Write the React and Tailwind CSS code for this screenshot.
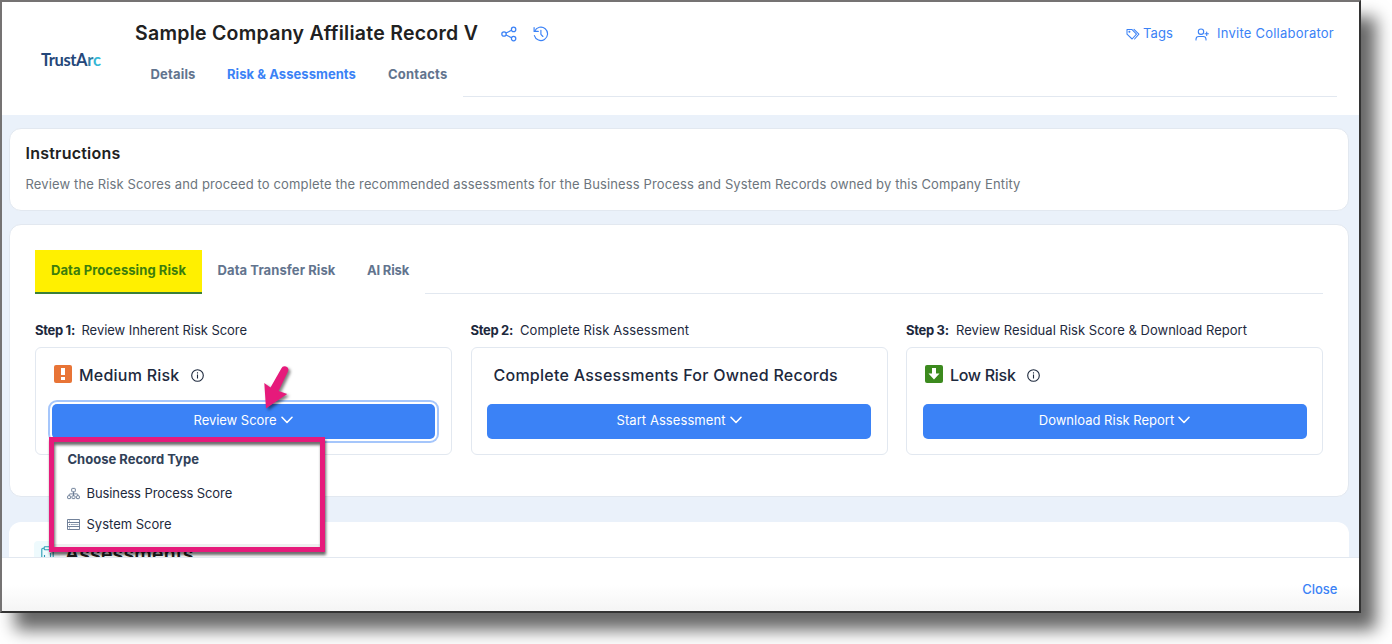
import React from 'react';

const ShareIcon = () => (
  <svg className="w-4 h-4" viewBox="0 0 16 16" fill="none" stroke="currentColor" strokeWidth="1.25">
    <circle cx="3" cy="8" r="2.2" />
    <circle cx="12.6" cy="3.4" r="2.2" />
    <circle cx="12.6" cy="12.6" r="2.2" />
    <path d="m5 7 5.6-2.7M5 9l5.6 2.7" />
  </svg>
);

const HistoryIcon = () => (
  <svg className="w-4 h-4" viewBox="0 0 16 16" fill="none" stroke="currentColor" strokeWidth="1.15" strokeLinecap="round" strokeLinejoin="round">
    <path d="M1.7 5.2A6.7 6.7 0 1 1 1.4 9.6" />
    <path d="M1.1 1.6v3.8h4.2M7.9 4.3v4l2 2.2" />
  </svg>
);

const TagsIcon = () => (
  <svg className="w-[14px] h-[13px]" viewBox="0 0 14 13" fill="none" stroke="currentColor" strokeWidth="1.05" strokeLinejoin="round">
    <path d="M1 1.4h4.8l4.7 4.7-4.4 4.9L1 6.2z" />
    <path d="M8 1.4 12.9 6.1 8.6 11" strokeLinecap="round" />
    <circle cx="3.4" cy="3.7" r="0.5" />
  </svg>
);

const InviteIcon = () => (
  <svg className="w-[14px] h-[13px]" viewBox="0 0 14 13" fill="none" stroke="currentColor" strokeWidth="1.1" strokeLinecap="round">
    <circle cx="6" cy="3.7" r="2.7" />
    <path d="M1 12v-.7c0-1.7 1.2-2.8 2.8-2.8h4.4c1.6 0 2.8 1.1 2.8 2.8v.7M11.7 4v3.4M10 5.7h3.4" />
  </svg>
);

const InfoIcon = () => (
  <svg className="w-[13px] h-[13px]" viewBox="0 0 13 13" fill="none" stroke="currentColor" strokeWidth="1.1">
    <circle cx="6.5" cy="6.5" r="5.8" />
    <path d="M6.5 5.6v4M6.5 3.2v1.3" />
  </svg>
);

const OrgIcon = () => (
  <svg className="w-[13px] h-[13px]" viewBox="0 0 13 13" fill="none" stroke="currentColor" strokeWidth="0.9">
    <rect x="4.7" y="1.4" width="3.6" height="3.4" rx="0.6" />
    <path d="M6.5 4.8v4M2.1 8.8V7.9q0-1 1-1h6.8q1 0 1 1v.9" />
    <rect x="0.6" y="8.8" width="3" height="2.8" rx="0.6" />
    <rect x="5" y="8.8" width="3" height="2.8" rx="0.6" />
    <rect x="9.4" y="8.8" width="3" height="2.8" rx="0.6" />
  </svg>
);

const ServerIcon = () => (
  <svg className="w-[13px] h-[13px]" viewBox="0 0 13 13" fill="none" stroke="currentColor" strokeWidth="0.9">
    <path d="M.5 1.5h12v10H.5zM.5 4.5h12M.5 8.5h12" />
    <path d="M2 3h1M2 6.5h1M3.8 6.5h1M2 10h1" />
    <path d="M5 6.5h6.5" strokeWidth="0.6" />
  </svg>
);

const ChevronIcon = () => (
  <svg className="w-3 h-2 ml-1 -mt-[3px]" viewBox="0 0 12 8" fill="none" stroke="currentColor" strokeWidth="1.6" strokeLinecap="round" strokeLinejoin="round">
    <path d="M1 1.3 6 6.5l5-5.2" />
  </svg>
);

const MediumIcon = () => (
  <svg className="w-[18px] h-[18px]" viewBox="0 0 18 18">
    <rect width="18" height="18" rx="2" fill="#e87436" />
    <path d="M7 3h4v7H7zM7 12h4v3H7z" fill="#fff" />
  </svg>
);

const LowIcon = () => (
  <svg className="w-[18px] h-[18px]" viewBox="0 0 18 18">
    <rect width="18" height="18" rx="2" fill="#3c8a1e" />
    <path d="M7 3h4v5.5h3.5L9 14.5 3.5 8.5H7z" fill="#fff" />
  </svg>
);

const ClipboardIcon = () => (
  <svg className="w-[13px] h-4" viewBox="0 0 13 16" fill="none" stroke="#2a9db5" strokeWidth="1.1">
    <path d="M3 2.2H1.8q-1 0-1 1V14q0 1 1 1h9.4q1 0 1-1V3.2q0-1-1-1H10" />
    <rect x="3.2" y="0.7" width="6.8" height="3" rx="0.8" />
    <path d="M3.5 9v3M6.5 11v1M9.5 7v5" />
  </svg>
);

const StepCard = ({ step, label, labelClass, active, button, buttonClass, children, menu }) => (
  <div className="relative">
    <p className="flex h-[18px] items-center leading-[18px]">
      <span className="w-[46.5px] shrink-0 font-bold tracking-[-0.31px]">{step}</span>
      <span className={labelClass}>{label}</span>
    </p>
    <div className="mt-2 h-[108px] rounded-md border border-slate-200 px-[15.5px] pt-[15px]">
      <div className="flex h-6 items-center text-base font-medium">{children}</div>
      <button
        className={`mt-[17px] flex h-[35px] items-center justify-center rounded-[5px] bg-[#3b82f6] pb-px text-white ${active ? 'w-[383px] shadow-[0_0_0_2px_#fff,0_0_0_4px_#a5c6fb]' : 'w-full'}`}
      >
        <span className={buttonClass}>{button}</span>
        <ChevronIcon />
      </button>
    </div>
    {menu}
  </div>
);

const RecordMenu = () => (
  <div className="absolute left-[14px] top-[116px] z-10 h-[115px] w-[276px] bg-[#efefef]">
    <div className="h-[107px] bg-white pl-[18px] pt-3">
      <p className="h-[20px] pl-[0.5px] font-bold leading-[20px] text-slate-700">Choose Record Type</p>
      <div className="mt-[14px] flex h-[21px] items-center gap-[6.5px]">
        <span className="text-slate-500"><OrgIcon /></span>
        <span className="tracking-[-0.1px]">Business Process Score</span>
      </div>
      <div className="mt-[10px] flex h-[21px] items-center gap-[6.5px]">
        <span className="text-slate-500"><ServerIcon /></span>
        <span>System Score</span>
      </div>
    </div>
    <div className="absolute inset-0 border-[5px] border-[#e61a7b] drop-shadow-[1px_3px_1.5px_rgba(0,0,0,0.6)]" />
  </div>
);

const PointerArrow = () => (
  <svg className="absolute left-[220px] top-[38px] z-20 h-[56px] w-[44px] drop-shadow-[2px_2px_1.5px_rgba(0,0,0,0.5)]" viewBox="255 360 44 56">
    <path
      d="M266 409.5 264.3 384l6.2 4.6 10.8-19.2a3.7 3.7 0 0 1 6.8 2.9L278.6 392l8.6 3z"
      fill="#e61a7b"
    />
  </svg>
);

const App = () => {
  return (
    <div className="h-[644px] w-[1392px] overflow-hidden bg-white font-['Inter',sans-serif] text-[13px] text-slate-800">
      <div className="flex h-[613px] w-[1361px] flex-col border-2 border-b-[#333] border-l-[#757373] border-r-[#333] border-t-[#757373] bg-white shadow-[15px_17px_16px_rgba(0,0,0,0.6)]">
        {/* Header */}
        <header className="flex h-[113px] shrink-0">
          <div className="flex w-[133px] shrink-0 items-center pl-[39px] pt-[4px] font-['Lato',sans-serif] text-[16.5px] font-bold tracking-[-0.4px] text-[#24477a]">
            TrustA<span className="text-[#2f7fa6]">r</span><span className="text-[#35b8d6]">c</span>
          </div>
          <div className="flex grow flex-col pr-[22px]">
            <div className="flex h-[63px] items-center">
              <h1 className="w-[366px] whitespace-nowrap pt-px text-[19.5px] font-semibold tracking-[0.26px] text-[#212121]">
                Sample Company Affiliate Record V
              </h1>
              <div className="flex gap-4 text-[#3b82f6]">
                <ShareIcon />
                <HistoryIcon />
              </div>
              <div className="ml-auto mr-[3px] flex items-center pt-px text-[#3b82f6]">
                <TagsIcon />
                <span className="ml-[3px] tracking-[0.1px]">Tags</span>
                <span className="ml-[22px]"><InviteIcon /></span>
                <span className="ml-2 tracking-[0.24px]">Invite Collaborator</span>
              </div>
            </div>
            <nav className="flex h-8 font-bold text-slate-500">
              <a className="w-[76.5px] pl-[15.5px] tracking-[0.17px]">Details</a>
              <a className="w-[161px] pl-[15.5px] tracking-[0.06px] text-[#3b82f6]">Risk &amp; Assessments</a>
              <a className="w-[90px] pl-[15.5px] tracking-[0.23px]">Contacts</a>
              <div className="grow border-b border-slate-200" />
            </nav>
          </div>
        </header>

        {/* Body */}
        <main className="h-[442px] shrink-0 overflow-hidden bg-[#eaf1fa] pl-[7px] pr-[10px] pt-[13px]">
          <section className="h-[83px] rounded-xl border border-slate-200 bg-white pl-[15.5px] pt-3">
            <h2 className="text-base font-semibold leading-6 tracking-[0.23px] text-[#212121]">Instructions</h2>
            <p className="mt-[9px] leading-5 tracking-[0.131px] text-[#6c757d]">
              Review the Risk Scores and proceed to complete the recommended assessments for the Business Process and System Records owned by this Company Entity
            </p>
          </section>

          <section className="mt-[13px] h-[273px] rounded-xl border border-slate-200 bg-white px-[25px] pt-[25px]">
            <nav className="flex h-[44px] font-bold leading-[41px] text-slate-500">
              <a className="w-[167px] border-b-2 border-[#3b7f3a] bg-[#fff000] pl-4 tracking-[0.075px] text-[#3c7d0c]">Data Processing Risk</a>
              <a className="w-[149.5px] pl-[15.5px] tracking-[0.097px]">Data Transfer Risk</a>
              <a className="w-[73.5px] pl-[15.5px] tracking-[-0.19px]">AI Risk</a>
              <div className="grow border-b border-slate-200" />
            </nav>
            <div className="mt-[27px] grid grid-cols-3 gap-[18.5px]">
              <StepCard
                step="Step 1:"
                label="Review Inherent Risk Score"
                labelClass="tracking-[-0.053px]"
                button="Review Score"
                buttonClass="tracking-[-0.035px]"
                active
                menu={<><RecordMenu /><PointerArrow /></>}
              >
                <span className="-mt-[3px] ml-[2px]"><MediumIcon /></span>
                <span className="ml-[7.5px] tracking-[0.23px]">Medium Risk</span>
                <span className="ml-[11px]"><InfoIcon /></span>
              </StepCard>
              <StepCard
                step="Step 2:"
                label="Complete Risk Assessment"
                labelClass="ml-[3px] tracking-[0.092px]"
                button="Start Assessment"
                buttonClass="tracking-[0.071px]"
              >
                <span className="ml-[6.5px] tracking-[0.25px]">Complete Assessments For Owned Records</span>
              </StepCard>
              <StepCard
                step="Step 3:"
                label="Review Residual Risk Score & Download Report"
                labelClass="ml-[3.5px] tracking-[0.025px]"
                button="Download Risk Report"
                buttonClass="tracking-[0.011px]"
              >
                <span className="-mt-[3px] ml-[2px]"><LowIcon /></span>
                <span className="ml-[7.5px] tracking-[-0.3px]">Low Risk</span>
                <span className="ml-[11px]"><InfoIcon /></span>
              </StepCard>
            </div>
          </section>

          <section className="mt-[25px] flex h-[80px] rounded-xl bg-white pl-[25px] pt-[19px]">
            <div className="flex h-[26px] w-[26px] items-center justify-center rounded bg-[#eefafd]">
              <ClipboardIcon />
            </div>
            <h2 className="ml-[5px] text-[19.5px] font-semibold leading-[26px] tracking-[0.15px] text-[#212121]">Assessments</h2>
          </section>
        </main>

        {/* Footer */}
        <footer className="flex grow items-center justify-end border-t border-slate-200 bg-gradient-to-b from-white from-50% to-[#f5f5f5] pr-[21.5px] pt-[10px] font-medium text-[#3b82f6]">
          Close
        </footer>
      </div>
    </div>
  );
};

export default App;
